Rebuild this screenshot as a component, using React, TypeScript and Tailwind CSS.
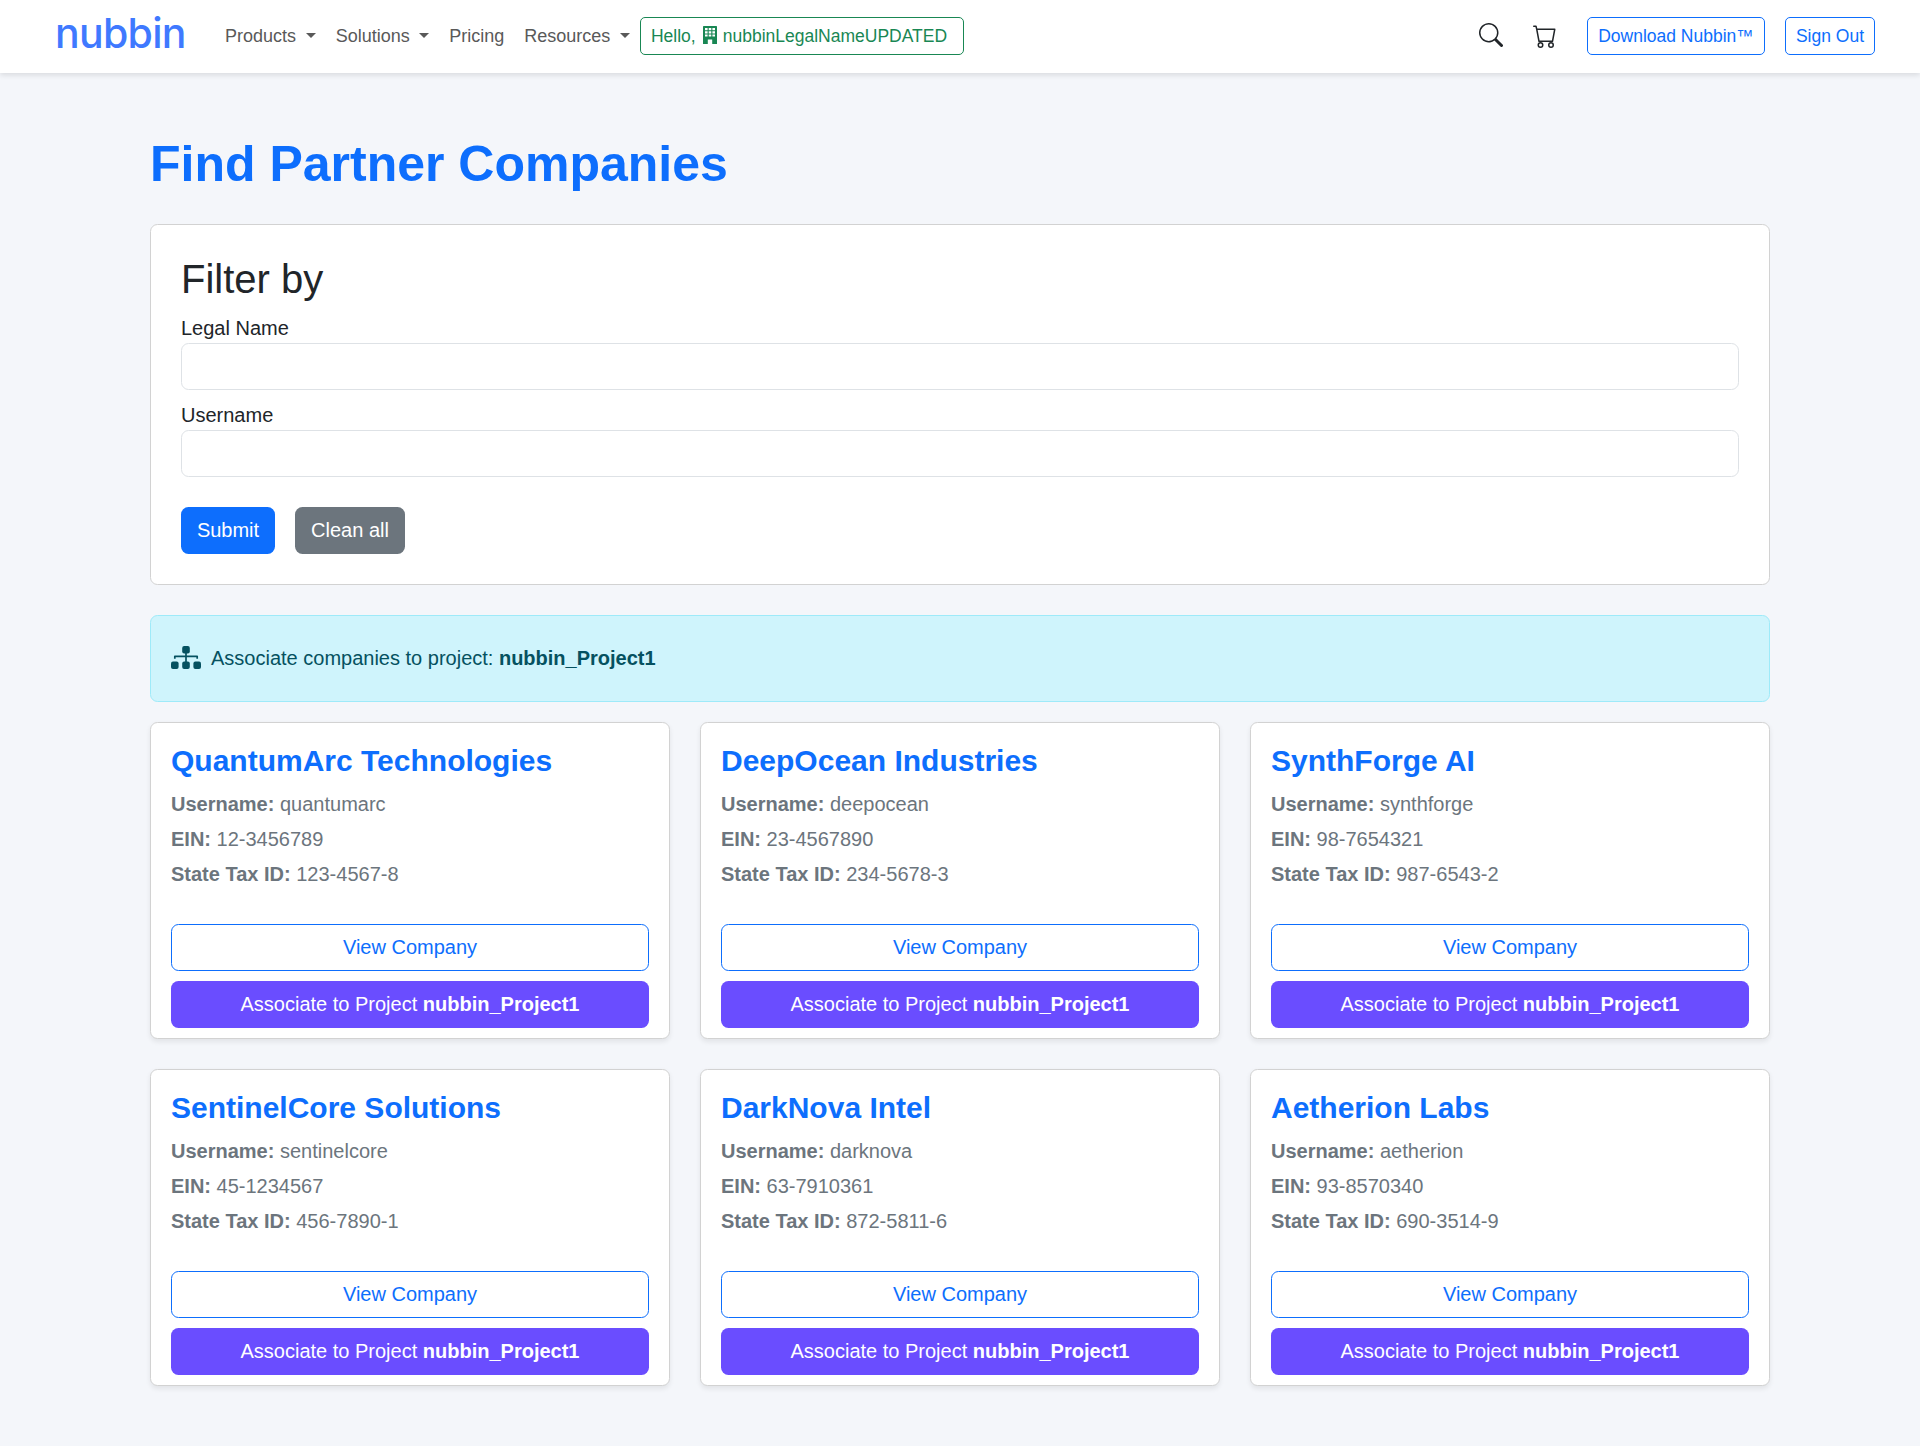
import React from "react";
import { BsSearch, BsCart } from "react-icons/bs";

const PROJECT = "nubbin_Project1";

const companies = [
  { name: "QuantumArc Technologies", username: "quantumarc", ein: "12-3456789", tax: "123-4567-8" },
  { name: "DeepOcean Industries", username: "deepocean", ein: "23-4567890", tax: "234-5678-3" },
  { name: "SynthForge AI", username: "synthforge", ein: "98-7654321", tax: "987-6543-2" },
  { name: "SentinelCore Solutions", username: "sentinelcore", ein: "45-1234567", tax: "456-7890-1" },
  { name: "DarkNova Intel", username: "darknova", ein: "63-7910361", tax: "872-5811-6" },
  { name: "Aetherion Labs", username: "aetherion", ein: "93-8570340", tax: "690-3514-9" },
];

function Caret() {
  return <span className="ml-[9.6px] h-0 w-0 -translate-y-[1px] border-x-[5px] border-t-[5px] border-x-transparent border-t-current" />;
}

function NavItem({ label, menu = false }: { label: string; menu?: boolean }) {
  return (
    <a className="flex items-center px-[10px] text-[18px] leading-[27px] text-[#595959]">
      {label}
      {menu && <Caret />}
    </a>
  );
}

function BuildingIcon() {
  return (
    <svg width="14" height="18" viewBox="0 0 14 18">
      <path
        fill="currentColor"
        fillRule="evenodd"
        d="M.7 0h12.6a.7.7 0 0 1 .7.7V18H9.2v-4.4H4.8V18H0V.7A.7.7 0 0 1 .7 0z M2 2v2.2h2.6V2z M5.7 2v2.2h2.6V2z M9.4 2v2.2H12V2z M2 5.2v2.2h2.6V5.2z M5.7 5.2v2.2h2.6V5.2z M9.4 5.2v2.2H12V5.2z M2 8.4v2.2h2.6V8.4z M5.7 8.4v2.2h2.6V8.4z M9.4 8.4v2.2H12V8.4z"
      />
    </svg>
  );
}

function SitemapIcon() {
  return (
    <svg className="mr-[10px] mb-[3px] shrink-0" width="30" height="23" viewBox="0 0 30 23" fill="currentColor">
      <rect x="11.2" y="0" width="7.6" height="7.5" rx="2" />
      <rect x="0" y="15.4" width="7.6" height="7.5" rx="2" />
      <rect x="11.2" y="15.4" width="7.6" height="7.5" rx="2" />
      <rect x="22.4" y="15.4" width="7.6" height="7.5" rx="2" />
      <path d="M3.8 12.8v-2.5h22.4v2.5M15 7v9" fill="none" stroke="currentColor" strokeWidth="1.7" strokeLinejoin="round" />
    </svg>
  );
}

function Header() {
  return (
    <header className="flex h-[73px] items-center bg-white pr-[45px] pb-[1px] pl-[55px] shadow-[0_2.5px_5px_rgba(0,0,0,0.1)]">
      <a className="mb-[6px] flex w-[160px] items-center font-['Inter'] text-[41px] leading-[42px] font-medium tracking-[-0.7px] text-[#3f79ff]">
        nubbin
      </a>
      <nav className="flex items-center">
        <NavItem label="Products" menu />
        <NavItem label="Solutions" menu />
        <NavItem label="Pricing" />
        <NavItem label="Resources" menu />
      </nav>
      <a className="flex h-[38px] w-[324px] items-center rounded-[5px] border border-[#198754] px-[10px] text-[17.5px] text-[#198754]">
        Hello,
        <span className="mr-[6px] mb-[2px] ml-[7px]">
          <BuildingIcon />
        </span>
        nubbinLegalNameUPDATED
      </a>
      <div className="ml-auto flex items-center text-[#212529]">
        <BsSearch size={24} className="mb-[3px]" />
        <BsCart size={24} className="mb-[1px] ml-[30px]" />
        <a className="ml-[30px] flex h-[38px] w-[178px] items-center justify-center rounded-[5px] border border-[#0d6efd] text-[17.5px] text-[#0d6efd]">
          Download Nubbin™
        </a>
        <a className="ml-[20px] flex h-[38px] w-[90px] items-center justify-center rounded-[5px] border border-[#0d6efd] text-[17.5px] text-[#0d6efd]">
          Sign Out
        </a>
      </div>
    </header>
  );
}

function Field({ label }: { label: string }) {
  return (
    <label className="mb-[10px] block">
      {label}
      <input className="block h-[47px] w-full rounded-[7.5px] border border-[#dee2e6] bg-white px-[15px]" />
    </label>
  );
}

function Detail({ label, value }: { label: string; value: string }) {
  return (
    <p className="mb-[5px] text-[#6c757d]">
      <b>{label}</b> {value}
    </p>
  );
}

function CompanyCard({ company }: { company: (typeof companies)[number] }) {
  return (
    <article className="rounded-[7.5px] border border-[#d2d2d2] bg-white px-[20px] pt-[20px] pb-[10px] shadow-[0_2.5px_5px_rgba(0,0,0,0.075)]">
      <h2 className="mb-[10px] text-[30px] leading-[36px] font-bold text-[#0d6efd]">{company.name}</h2>
      <Detail label="Username:" value={company.username} />
      <Detail label="EIN:" value={company.ein} />
      <Detail label="State Tax ID:" value={company.tax} />
      <button className="mt-[35px] block h-[47px] w-full rounded-[7.5px] border border-[#0d6efd] pb-[2px] text-[#0d6efd]">
        View Company
      </button>
      <button className="mt-[10px] block h-[47px] w-full rounded-[7.5px] bg-[#6a4dff] pb-[2px] text-white">
        Associate to Project <b>{PROJECT}</b>
      </button>
    </article>
  );
}

export default function App() {
  return (
    <div className="min-h-[1446px] bg-[#f4f6fa] font-['Liberation_Sans',Arial,sans-serif] text-[20px] leading-[30px] text-[#212529]">
      <Header />
      <main className="mx-auto w-[1620px] pt-[61px]">
        <h1 className="mb-[30px] text-[50px] leading-[60px] font-bold text-[#0d6efd]">Find Partner Companies</h1>
        <section className="mb-[30px] rounded-[7.5px] border border-[#d2d2d2] bg-white p-[30px]">
          <h2 className="mb-[10px] text-[40px] leading-[48px]">Filter by</h2>
          <Field label="Legal Name" />
          <Field label="Username" />
          <div className="mt-[30px] flex gap-[20px]">
            <button className="h-[47px] w-[94px] rounded-[7.5px] bg-[#0d6efd] pb-[2px] text-white">Submit</button>
            <button className="h-[47px] w-[110px] rounded-[7.5px] bg-[#6c757d] pb-[2px] text-white">Clean all</button>
          </div>
        </section>
        <div className="mb-[20px] flex h-[87px] items-center rounded-[7.5px] border border-[#9eeaf9] bg-[#cff4fc] px-[20px] text-[#055160]">
          <SitemapIcon />
          <p className="mb-[2px]">
            Associate companies to project: <b>{PROJECT}</b>
          </p>
        </div>
        <section className="grid grid-cols-3 gap-[30px]">
          {companies.map((c) => (
            <CompanyCard key={c.username} company={c} />
          ))}
        </section>
      </main>
    </div>
  );
}
